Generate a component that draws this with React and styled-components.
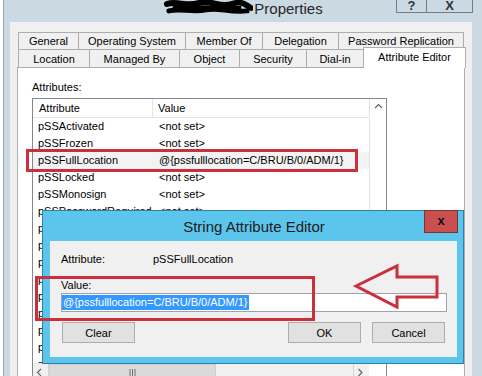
import React from "react";
import styled, { createGlobalStyle } from "styled-components";

const GlobalStyle = createGlobalStyle`
  html, body {
    margin: 0;
    padding: 0;
    background: #ffffff;
  }
  * {
    box-sizing: border-box;
  }
`;

const RED = "#c9303c";

const Screen = styled.div`
  position: relative;
  width: 482px;
  height: 376px;
  overflow: hidden;
  background: #ffffff;
  font-family: "Liberation Sans", Arial, sans-serif;
  font-size: 11px;
  color: #000;
`;

const Window = styled.div`
  display: flex;
  flex-direction: column;
  height: 376px;
  overflow: hidden;
  margin-left: 3px;
  background: #cbd9e3;
  border-left: 1px solid #9aa8b2;
`;

const TitleBar = styled.div`
  position: relative;
  flex-shrink: 0;
  height: 22px;
  display: flex;
  justify-content: center;
  align-items: flex-start;
`;

const Title = styled.div`
  display: flex;
  align-items: center;
  margin-top: -1px;
  font-size: 15px;
  line-height: 17px;
  color: #262626;
`;

const CaptionButtons = styled.div`
  position: absolute;
  top: -1px;
  right: 9px;
  display: flex;
  border: 1px solid #6f7e89;
  border-top: none;
`;

const CaptionBtn = styled.div`
  width: ${(p) => p.$w}px;
  height: 13px;
  overflow: hidden;
  display: flex;
  justify-content: center;
  align-items: flex-end;
  font-size: 13px;
  font-weight: bold;
  line-height: 12px;
  color: #333;
  & + & {
    border-left: 1px solid #6f7e89;
  }
`;

const Client = styled.div`
  flex: 1 0 auto;
  display: flex;
  flex-direction: column;
  margin: 0 10px 0 6px;
  padding: 10px 7px 0 7px;
  background: #f0f0f0;
`;

const TabRow = styled.div`
  flex-shrink: 0;
  display: flex;
  align-items: flex-end;
  height: ${(p) => p.$h}px;
  margin-left: 1px;
`;

const Tab = styled.div`
  position: relative;
  z-index: ${(p) => (p.$active ? 1 : 0)};
  width: ${(p) => p.$w}px;
  height: ${(p) => (p.$active ? 21 : p.$h)}px;
  margin-right: -1px;
  margin-bottom: ${(p) => (p.$active ? -1 : 0)}px;
  display: flex;
  align-items: center;
  justify-content: center;
  white-space: nowrap;
  border: 1px solid #adadad;
  border-bottom: none;
  background: ${(p) => (p.$active ? "#ffffff" : "#f0f0f0")};
  padding-bottom: ${(p) => (p.$active ? 3 : 0)}px;
`;

const Panel = styled.div`
  flex: 1 0 auto;
  background: #ffffff;
  border: 1px solid #adadad;
  padding: 13px 0 0 14px;
`;

const SectionLabel = styled.div`
  line-height: 12px;
  margin-bottom: 5px;
`;

const ListBox = styled.div`
  width: 355px;
  height: 283px;
  border: 1px solid #828790;
  display: grid;
  grid-template-columns: 1fr 17px;
  grid-template-rows: 1fr 17px;
`;

const ListArea = styled.div`
  overflow: hidden;
`;

const HeaderRow = styled.div`
  display: flex;
  height: 19px;
  border-bottom: 1px solid #e5e5e5;
`;

const HeaderCell = styled.div`
  width: ${(p) => (p.$w ? `${p.$w}px` : "auto")};
  flex: ${(p) => (p.$w ? "none" : 1)};
  padding-left: ${(p) => p.$pad}px;
  line-height: 18px;
  border-right: ${(p) => (p.$w ? "1px solid #e5e5e5" : "none")};
`;

const Row = styled.div`
  display: flex;
  height: 17px;
  line-height: 17px;
  white-space: nowrap;
  background: ${(p) => (p.$sel ? "#f3f3f3" : "transparent")};
`;

const Cell = styled.div`
  width: ${(p) => (p.$w ? `${p.$w}px` : "auto")};
  flex: ${(p) => (p.$w ? "none" : 1)};
  padding-left: ${(p) => p.$pad}px;
  overflow: hidden;
`;

const VScroll = styled.div`
  border-left: 1px solid #e2e2e2;
  background: #ffffff;
`;

const ArrowBox = styled.div`
  width: ${(p) => p.$w || 16}px;
  height: 16px;
  display: flex;
  align-items: center;
  justify-content: center;
  border-right: ${(p) => (p.$edge === "right" ? "1px solid #d4d4d4" : "none")};
  border-left: ${(p) => (p.$edge === "left" ? "1px solid #d4d4d4" : "none")};
`;

const HScroll = styled.div`
  display: flex;
  background: #f0f0f0;
  border-top: 1px solid #e6e6e6;
`;

const Thumb = styled.div`
  width: ${(p) => p.$w}px;
  display: flex;
  align-items: center;
  justify-content: center;
  background: #dadada;
  border: 1px solid #cfcfcf;
`;

const Track = styled.div`
  flex: 1;
`;

const Corner = styled.div`
  background: #ffffff;
`;

const Dialog = styled.div`
  position: absolute;
  left: 42px;
  top: 210px;
  width: 422px;
  height: 154px;
  display: flex;
  flex-direction: column;
  background: #5cc5ec;
  border: 1px solid #2f7fa8;
  z-index: 5;
`;

const DialogTitle = styled.div`
  position: relative;
  height: 30px;
  display: flex;
  align-items: center;
  justify-content: center;
  font-size: 15px;
  color: #1c1c1c;
  padding-left: 2px;
`;

const DialogClose = styled.div`
  position: absolute;
  top: -1px;
  right: 5px;
  width: 34px;
  height: 23px;
  display: flex;
  align-items: center;
  justify-content: center;
  background: #c9504e;
  border: 1px solid #7a3434;
  font-size: 13px;
  font-weight: bold;
  color: #111;
  padding-bottom: 2px;
`;

const DialogClient = styled.div`
  flex: 1;
  margin: 0 6px 6px 7px;
  padding: 11px 10px 0 11px;
  background: #f1f0f1;
`;

const FieldRow = styled.div`
  display: flex;
  line-height: 14px;
  margin-top: ${(p) => p.$mt || 0}px;
`;

const FieldLabel = styled.div`
  width: ${(p) => (p.$w ? `${p.$w}px` : "auto")};
`;

const ValueInput = styled.div`
  margin-top: 1px;
  height: 19px;
  display: flex;
  align-items: center;
  background: #ffffff;
  border: 1px solid #9ea3ab;
`;

const Selected = styled.span`
  background: #3399ff;
  color: #ffffff;
  line-height: 15px;
  padding: 0 1px;
  white-space: nowrap;
`;

const ButtonRow = styled.div`
  display: flex;
  margin-top: 10px;
  padding: 0 2px 0 1px;
`;

const Button = styled.div`
  width: 73px;
  height: 21px;
  display: flex;
  align-items: center;
  justify-content: center;
  background: #e1e1e1;
  border: 1px solid #adadad;
  margin-left: ${(p) => (p.$push ? "auto" : p.$ml ? `${p.$ml}px` : "0")};
`;

const Highlight = styled.div`
  position: absolute;
  left: ${(p) => p.$x}px;
  top: ${(p) => p.$y}px;
  width: ${(p) => p.$w}px;
  height: ${(p) => p.$h}px;
  border: 3px solid ${RED};
  z-index: 6;
  pointer-events: none;
`;

const ArrowMark = styled.svg`
  position: absolute;
  left: 352px;
  top: 262px;
  z-index: 6;
  overflow: visible;
`;

const Scribble = () => (
  <svg width="90" height="18" viewBox="0 0 92 18" style={{ marginRight: 1 }}>
    <path d="M4 5 C14 1 24 8 36 4 S58 9 70 5 S84 6 90 9" stroke="#000" strokeWidth="6" fill="none" strokeLinecap="round" />
    <path d="M6 12 C18 9 30 14 44 11 S66 14 86 12" stroke="#000" strokeWidth="5" fill="none" strokeLinecap="round" />
    <path d="M10 8 L80 9" stroke="#000" strokeWidth="4" fill="none" />
  </svg>
);

const Chevron = ({ dir }) => {
  const d = {
    up: "M1 5 L4.5 1.5 L8 5",
    left: "M5 1 L1.5 4.5 L5 8",
    right: "M1.5 1 L5 4.5 L1.5 8",
  }[dir];
  return (
    <svg width="9" height="9" viewBox="0 0 9 9">
      <path d={d} stroke="#606060" strokeWidth="1.1" fill="none" />
    </svg>
  );
};

const rows = [
  ["pSSActivated", "<not set>"],
  ["pSSFrozen", "<not set>"],
  ["pSSFullLocation", "@{pssfulllocation=C/BRU/B/0/ADM/1}", true],
  ["pSSLocked", "<not set>"],
  ["pSSMonosign", "<not set>"],
  ["pSSPasswordRequired", "<not set>"],
  ["pSSPasswordUnlock", "<not set>"],
  ["pSSPhone", "<not set>"],
  ["pSSProfile", "<not set>"],
  ["pSSRole", "<not set>"],
  ["pSSSite", "<not set>"],
  ["pSSStatus", "<not set>"],
  ["pSSType", "<not set>"],
  ["pSSUnit", "<not set>"],
  ["pSSUser", "<not set>"],
];

const tabsTop = [
  ["General", 61],
  ["Operating System", 108],
  ["Member Of", 78],
  ["Delegation", 77],
  ["Password Replication", 126],
];

const tabsBottom = [
  ["Location", 72],
  ["Managed By", 91],
  ["Object", 61],
  ["Security", 68],
  ["Dial-in", 58],
  ["Attribute Editor", 103, true],
];

export default function App() {
  return (
    <Screen>
      <GlobalStyle />
      <Window>
        <TitleBar>
          <Title>
            <Scribble />
            Properties
          </Title>
          <CaptionButtons>
            <CaptionBtn $w={29}>?</CaptionBtn>
            <CaptionBtn $w={46}>X</CaptionBtn>
          </CaptionButtons>
        </TitleBar>
        <Client>
          <TabRow $h={17}>
            {tabsTop.map(([label, w]) => (
              <Tab key={label} $w={w} $h={17}>
                {label}
              </Tab>
            ))}
          </TabRow>
          <TabRow $h={18}>
            {tabsBottom.map(([label, w, active]) => (
              <Tab key={label} $w={w} $h={18} $active={active}>
                {label}
              </Tab>
            ))}
          </TabRow>
          <Panel>
            <SectionLabel>Attributes:</SectionLabel>
            <ListBox>
              <ListArea>
                <HeaderRow>
                  <HeaderCell $w={120} $pad={6}>Attribute</HeaderCell>
                  <HeaderCell $pad={5}>Value</HeaderCell>
                </HeaderRow>
                {rows.map(([name, value, sel]) => (
                  <Row key={name} $sel={sel}>
                    <Cell $w={120} $pad={5}>{name}</Cell>
                    <Cell $pad={6}>{value}</Cell>
                  </Row>
                ))}
              </ListArea>
              <VScroll>
                <ArrowBox $w={16}>
                  <Chevron dir="up" />
                </ArrowBox>
              </VScroll>
              <HScroll>
                <ArrowBox $edge="right">
                  <Chevron dir="left" />
                </ArrowBox>
                <Thumb $w={167}>
                  <svg width="7" height="7" viewBox="0 0 7 7">
                    <path d="M1 0 V7 M3.5 0 V7 M6 0 V7" stroke="#707070" strokeWidth="1" />
                  </svg>
                </Thumb>
                <Track />
                <ArrowBox $edge="left">
                  <Chevron dir="right" />
                </ArrowBox>
              </HScroll>
              <Corner />
            </ListBox>
          </Panel>
        </Client>
      </Window>

      <Dialog>
        <DialogTitle>
          String Attribute Editor
          <DialogClose>x</DialogClose>
        </DialogTitle>
        <DialogClient>
          <FieldRow>
            <FieldLabel $w={92}>Attribute:</FieldLabel>
            <FieldLabel>pSSFullLocation</FieldLabel>
          </FieldRow>
          <FieldRow $mt={12}>
            <FieldLabel>Value:</FieldLabel>
          </FieldRow>
          <ValueInput>
            <Selected>@{"{"}pssfulllocation=C/BRU/B/0/ADM/1{"}"}</Selected>
          </ValueInput>
          <ButtonRow>
            <Button>Clear</Button>
            <Button $push>OK</Button>
            <Button $ml={11}>Cancel</Button>
          </ButtonRow>
        </DialogClient>
      </Dialog>

      <Highlight $x={26} $y={149} $w={332} $h={23} />
      <Highlight $x={35} $y={276} $w={280} $h={45} />
      <ArrowMark width="90" height="50" viewBox="0 0 90 50">
        <path
          d="M4 24 L45 4 L45 15 L85 15 L85 35 L45 35 L45 45 Z"
          stroke={RED}
          strokeWidth="3"
          fill="none"
          strokeLinejoin="miter"
        />
      </ArrowMark>
    </Screen>
  );
}
